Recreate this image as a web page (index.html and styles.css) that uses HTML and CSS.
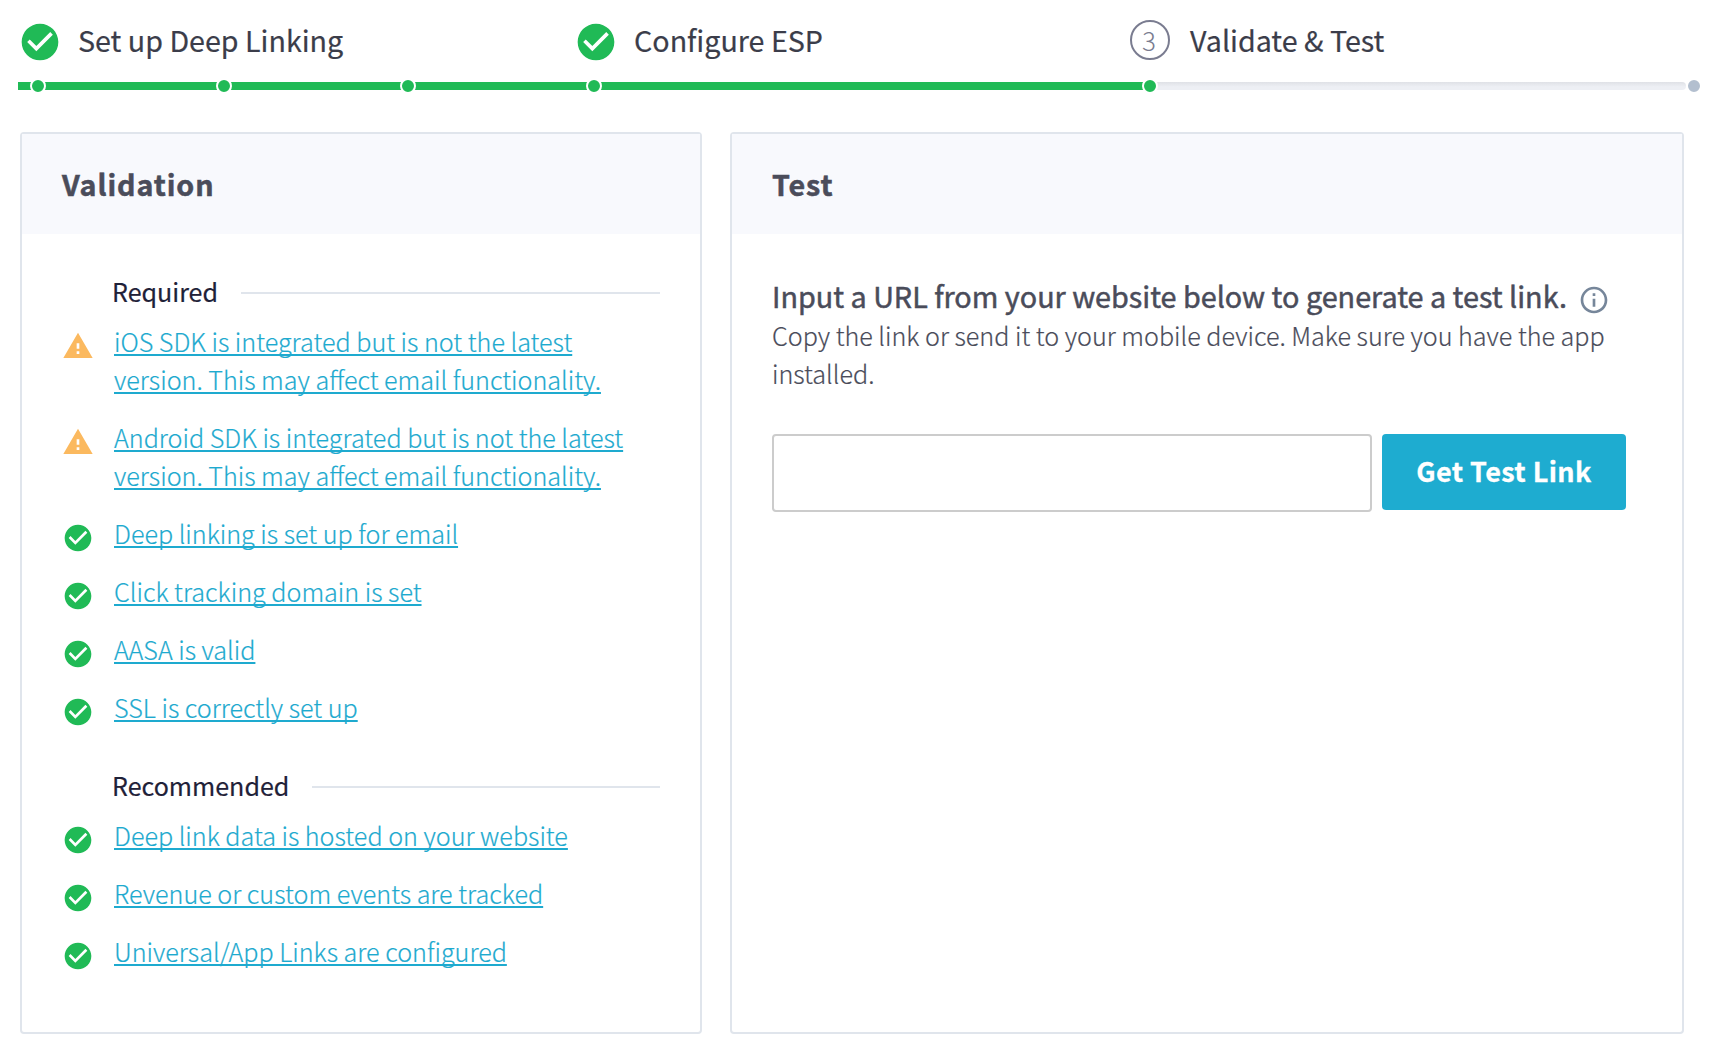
FILE: index.html
```html
<!DOCTYPE html>
<html lang="en">
<head>
<meta charset="utf-8">
<title>Validate &amp; Test</title>
<link rel="stylesheet" href="styles.css">
</head>
<body>
<svg class="sprite" aria-hidden="true">
  <symbol id="check" viewBox="0 0 24 24"><path d="M12 2C6.48 2 2 6.48 2 12s4.48 10 10 10 10-4.48 10-10S17.52 2 12 2zm-2 15l-5-5 1.41-1.41L10 14.17l7.59-7.59L19 8l-9 9z"/></symbol>
  <symbol id="warning" viewBox="0 0 24 24"><path d="M1 21h22L12 2 1 21zm12-3h-2v-2h2v2zm0-4h-2v-4h2v4z"/></symbol>
  <symbol id="info" viewBox="0 0 24 24"><path d="M11 17h2v-6h-2v6zm1-15C6.48 2 2 6.48 2 12s4.48 10 10 10 10-4.48 10-10S17.52 2 12 2zm0 18c-4.41 0-8-3.59-8-8s3.59-8 8-8 8 3.59 8 8-3.59 8-8 8zM11 9h2V7h-2v2z"/></symbol>
</svg>

<header class="stepper">
  <ol class="steps">
    <li class="step"><svg class="step-icon"><use href="#check"/></svg><span class="step-label">Set up Deep Linking</span></li>
    <li class="step"><svg class="step-icon"><use href="#check"/></svg><span class="step-label">Configure ESP</span></li>
    <li class="step"><span class="step-number">3</span><span class="step-label">Validate &amp; Test</span></li>
  </ol>
  <div class="track">
    <div class="track-done"></div>
    <i class="dot" style="left: 20px"></i>
    <i class="dot" style="left: 206px"></i>
    <i class="dot" style="left: 390px"></i>
    <i class="dot" style="left: 576px"></i>
    <i class="dot" style="left: 1132px"></i>
    <i class="dot dot-pending" style="left: 1676px"></i>
  </div>
</header>

<main class="panels">
  <section class="panel">
    <h2 class="panel-title">Validation</h2>
    <div class="panel-body checks">
      <h3 class="group-title"><span class="group-name">Required</span></h3>
      <ul class="check-list">
        <li class="check-item"><svg class="icon icon-warning"><use href="#warning"/></svg><a class="check-link" href="#">iOS SDK is integrated but is not the latest version. This may affect email functionality.</a></li>
        <li class="check-item"><svg class="icon icon-warning"><use href="#warning"/></svg><a class="check-link" href="#">Android SDK is integrated but is not the latest version. This may affect email functionality.</a></li>
        <li class="check-item"><svg class="icon icon-ok"><use href="#check"/></svg><a class="check-link" href="#">Deep linking is set up for email</a></li>
        <li class="check-item"><svg class="icon icon-ok"><use href="#check"/></svg><a class="check-link" href="#">Click tracking domain is set</a></li>
        <li class="check-item"><svg class="icon icon-ok"><use href="#check"/></svg><a class="check-link" href="#">AASA is valid</a></li>
        <li class="check-item"><svg class="icon icon-ok"><use href="#check"/></svg><a class="check-link" href="#">SSL is correctly set up</a></li>
      </ul>
      <h3 class="group-title"><span class="group-name">Recommended</span></h3>
      <ul class="check-list">
        <li class="check-item"><svg class="icon icon-ok"><use href="#check"/></svg><a class="check-link" href="#">Deep link data is hosted on your website</a></li>
        <li class="check-item"><svg class="icon icon-ok"><use href="#check"/></svg><a class="check-link" href="#">Revenue or custom events are tracked</a></li>
        <li class="check-item"><svg class="icon icon-ok"><use href="#check"/></svg><a class="check-link" href="#">Universal/App Links are configured</a></li>
      </ul>
    </div>
  </section>

  <section class="panel">
    <h2 class="panel-title">Test</h2>
    <div class="panel-body test">
      <h3 class="test-heading"><span>Input a URL from your website below to generate a test link.</span><svg class="icon icon-info"><use href="#info"/></svg></h3>
      <p class="test-text">Copy the link or send it to your mobile device. Make sure you have the app installed.</p>
      <form class="test-form">
        <input class="url-input" type="text" aria-label="URL">
        <button class="submit" type="button">Get Test Link</button>
      </form>
    </div>
  </section>
</main>
</body>
</html>
```
FILE: styles.css
```css
* { box-sizing: border-box; }

body {
  margin: 0;
  background: #fff;
  color: #4a4c5a;
  font-family: "Source Sans Pro", "Noto Sans CJK SC", "Noto Sans", sans-serif;
}

h2, h3, p, ol, ul { margin: 0; padding: 0; list-style: none; }

.sprite { display: none; }

/* Stepper */
.stepper { padding: 18px 0 0 18px; }

.steps {
  display: grid;
  grid-template-columns: 556px 556px 1fr;
  height: 64px;
}

.step { display: flex; align-items: flex-start; }

.step-icon {
  width: 44px;
  height: 44px;
  margin: 2px 16px 0 0;
  fill: #20ba56;
}

.step-number {
  width: 40px;
  height: 40px;
  margin: 2px 20px 0 0;
  padding-right: 2px;
  border: 2px solid #7a7c90;
  border-radius: 50%;
  color: #7a7c90;
  font-size: 26px;
  font-weight: 300;
  line-height: 35px;
  text-align: center;
}

.step-label {
  color: #3b3d4a;
  font-size: 28.65px;
  font-weight: 400;
  line-height: 44px;
  -webkit-text-stroke: 0.2px;
}

.track {
  position: relative;
  width: 1668px;
  height: 8px;
  border-radius: 0 4px 4px 0;
  background: linear-gradient(#dfe1e6, #edeff4 60%);
}

.track-done { width: 1132px; height: 8px; background: #20ba56; }

.dot {
  position: absolute;
  top: -4px;
  width: 16px;
  height: 16px;
  margin-left: -8px;
  border: 2px solid #fff;
  border-radius: 50%;
  background: #20ba56;
}

.dot-pending { background: #b3bfcf; }

/* Panels */
.panels {
  display: grid;
  grid-template-columns: 682px 954px;
  gap: 28px;
  height: 902px;
  margin: 42px 0 0 20px;
}

.panel { border: 2px solid #e0e5ec; border-radius: 4px; }

.panel-title {
  height: 100px;
  padding-left: 40px;
  background: #f8f9fd;
  font-size: 28.7px;
  font-weight: 700;
  line-height: 100px;
  letter-spacing: 0.9px;
  -webkit-text-stroke: 0.5px;
}

.checks { padding: 40px 40px 0; }

.group-title {
  display: flex;
  align-items: center;
  gap: 23px;
  height: 38px;
  margin: 0 0 10px 50px;
  color: #1f2138;
  font-size: 25.05px;
  font-weight: 400;
}

.group-name { margin-bottom: 4px; line-height: 34px; -webkit-text-stroke: 0.2px; }

.group-title::after { content: ""; flex: 1; height: 2px; background: #e0e5ec; }

.check-list { display: grid; gap: 20px; margin-bottom: 42px; }

.check-item { display: flex; align-items: flex-start; }

.icon { flex: none; width: 32px; height: 32px; }
.check-item .icon { margin: 8px 20px -2px 0; }
.icon-ok { fill: #20ba56; }
.icon-warning { fill: #fbb95f; }
.icon-info { margin-top: 8px; fill: #76869a; stroke: none; }

.check-link {
  color: #1eaacf;
  font-size: 25.13px;
  font-weight: 300;
  line-height: 38px;
  text-decoration: underline 2px;
  text-underline-offset: 2px;
  text-decoration-skip-ink: none;
  -webkit-text-stroke: 0.2px;
}

/* Test panel */
.test { padding: 42px 56px 0 40px; }

.test-heading {
  display: flex;
  align-items: center;
  gap: 11px;
  font-size: 28.75px;
  font-weight: 400;
  line-height: 40px;
  white-space: nowrap;
  -webkit-text-stroke: 0.5px;
}

.test-text { font-size: 25.12px; font-weight: 300; line-height: 38px; -webkit-text-stroke: 0.2px; }

.test-form { display: flex; align-items: flex-start; gap: 10px; margin-top: 42px; }

.url-input {
  width: 600px;
  height: 78px;
  padding: 0 16px;
  border: 2px solid #ccc;
  border-radius: 4px;
  background: #fff;
  font: inherit;
}

.submit {
  width: 244px;
  height: 76px;
  padding: 0 0 2px;
  border: 0;
  border-radius: 4px;
  background: #1eacd0;
  color: #fff;
  font: 700 27px/74px "Source Sans Pro", "Noto Sans CJK SC", sans-serif;
  letter-spacing: 0.4px;
  -webkit-text-stroke: 0.3px;
}
```
